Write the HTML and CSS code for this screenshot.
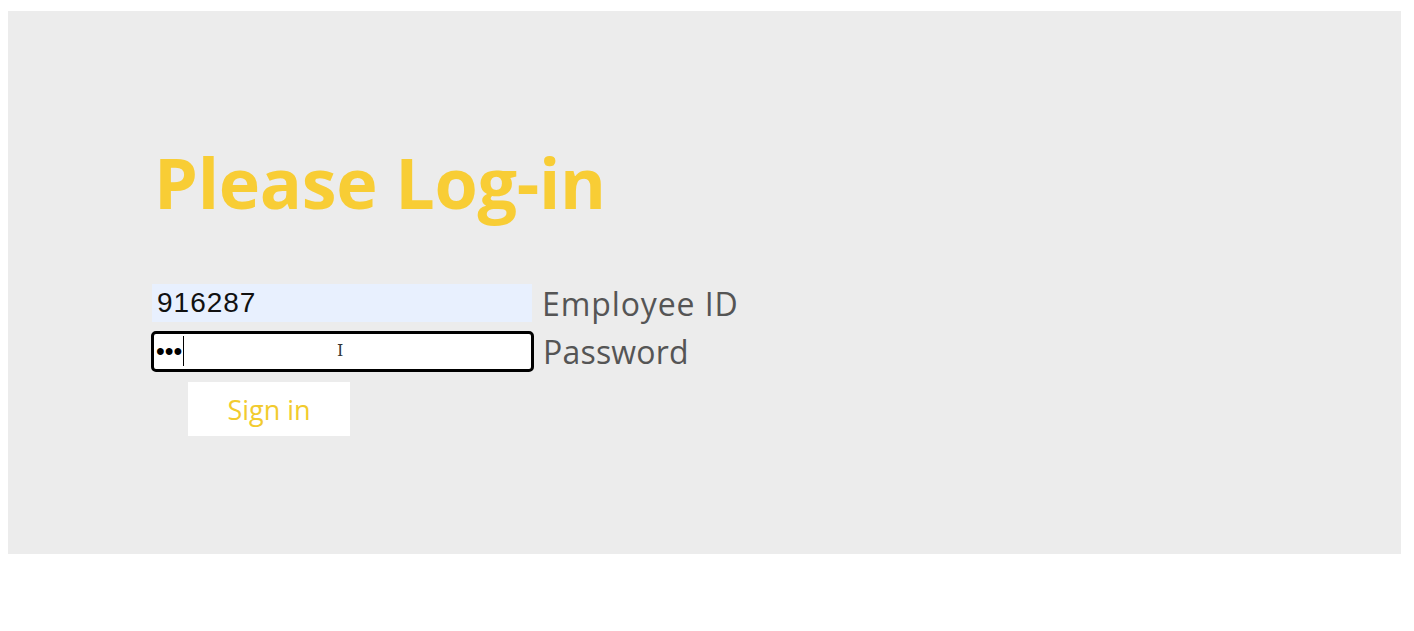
FILE: index.html
```
<!DOCTYPE html>
<html>
<head>
<meta charset="utf-8">
<title>Please Log-in</title>
<link rel="stylesheet" href="styles.css">
</head>
<body>
<div class="panel">
  <h1 class="title">Please Log-in</h1>
  <form class="form">
    <div class="row">
      <input class="field field-filled" type="text" value="916287">
      <label class="label label-id">Employee ID</label>
    </div>
    <div class="row">
      <div class="field field-focus"><span class="dots">•••</span><span class="caret"></span><span class="ibeam">I</span></div>
      <label class="label label-pw">Password</label>
    </div>
    <div class="actions">
      <button class="btn" type="button">Sign in</button>
    </div>
  </form>
</div>
</body>
</html>
```
FILE: styles.css
```
html, body { margin: 0; padding: 0; background: #fff; }
body { padding: 11px 13px 0 8px; }
.panel {
  background: #ececec;
  height: 543px;
  padding: 0 0 0 144px;
  box-sizing: border-box;
  display: flex;
  flex-direction: column;
}
.title {
  margin: 126px 0 0 0;
  font-family: "Open Sans", "Noto Sans", sans-serif;
  font-weight: 700;
  font-size: 70px;
  line-height: 90px;
  color: #f8cd35;
  letter-spacing: -0.3px;
  padding-left: 2px;
}
.form { margin-top: 52px; display: flex; flex-direction: column; }
.row { display: flex; align-items: center; height: 48px; }
.field {
  box-sizing: border-box;
  width: 380px;
  height: 38px;
  margin: 0;
  border: none;
  outline: none;
  font-family: "Liberation Sans", Arial, sans-serif;
  font-size: 28px;
  letter-spacing: 1px;
  color: #111;
  padding: 0 5px;
  background: #e8f0fe;
}
.field-focus {
  width: 383px;
  height: 41px;
  margin-left: -1px;
  background: #fff;
  border: 3px solid #000;
  border-radius: 5px;
  display: flex;
  align-items: center;
  padding: 0 2px;
  position: relative;
}
.dots { font-size: 25px; letter-spacing: 0; color: #000; line-height: 1; }
.caret { width: 1px; height: 30px; background: #000; margin-left: 1px; }
.ibeam {
  position: absolute;
  left: 183px;
  top: 7px;
  font-family: "DejaVu Serif", serif;
  font-size: 16px;
  color: #333;
}
.label {
  margin-left: 10px;
  font-family: "Open Sans", "Noto Sans", sans-serif;
  font-size: 32px;
  color: #555;
}
.label-id { letter-spacing: 0.9px; }
.label-pw { letter-spacing: 0.2px; margin-left: 9px; }
.actions { padding-left: 36px; margin-top: 7px; }
.btn {
  width: 162px;
  height: 54px;
  background: #fff;
  border: none;
  font-family: "Open Sans", "Noto Sans", sans-serif;
  font-size: 27px;
  color: #f2cb2e;
  padding: 0;
}
```
